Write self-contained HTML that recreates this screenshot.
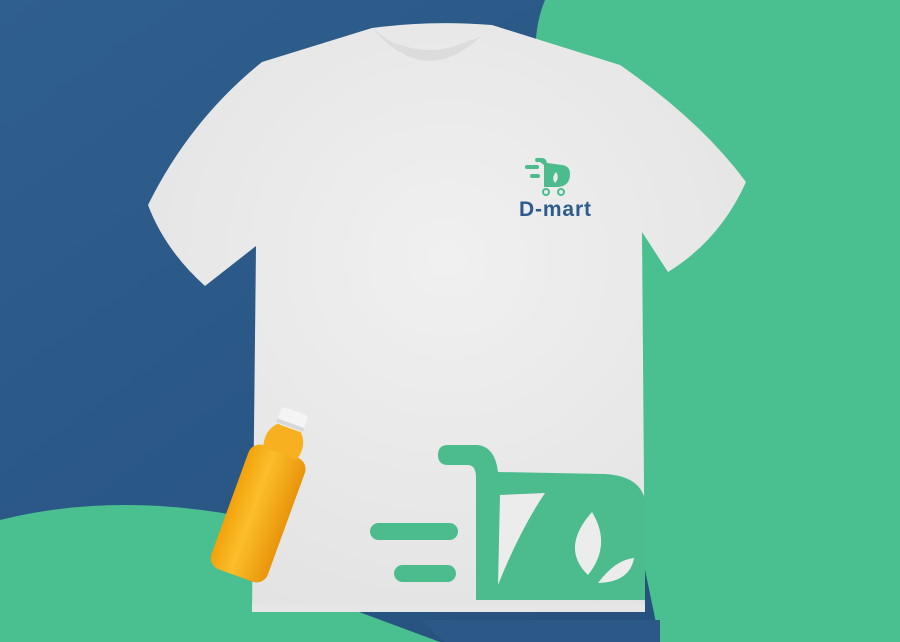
<!DOCTYPE html>
<html><head><meta charset="utf-8"><style>
html,body{margin:0;padding:0;width:900px;height:642px;overflow:hidden;background:#2d5b89}
svg{display:block}
</style></head><body>
<svg width="900" height="642" viewBox="0 0 900 642" xmlns="http://www.w3.org/2000/svg">
<defs>
<linearGradient id="bg" x1="0" y1="0" x2="1" y2="1"><stop offset="0" stop-color="#2f5f8e"/><stop offset="1" stop-color="#254f7c"/></linearGradient>
<linearGradient id="juice" x1="0" y1="0" x2="1" y2="0"><stop offset="0" stop-color="#f2a20c"/><stop offset="0.4" stop-color="#fbbe2a"/><stop offset="1" stop-color="#e9940a"/></linearGradient>
<radialGradient id="shirt" cx="0.5" cy="0.4" r="0.7"><stop offset="0" stop-color="#f0f0f0"/><stop offset="1" stop-color="#e2e2e2"/></radialGradient>
</defs>
<rect width="900" height="642" fill="url(#bg)"/>
<path d="M545 0 Q520 60 560 160 L660 642 L900 642 L900 0Z" fill="#4abf8f"/>
<path d="M0 520 Q120 490 260 520 L300 590 L440 642 L0 642Z" fill="#4abf8f"/>
<path d="M420 620 L660 620 L660 642 L445 642Z" fill="#2b5886"/>
<!-- shirt -->
<path d="M372 28 Q430 20 492 25 L620 65 Q700 120 746 182 Q720 240 668 272 L642 232 L645 612 L252 612 L256 246 L205 286 Q165 250 148 205 Q190 120 262 62 Z" fill="url(#shirt)"/>
<path d="M372 28 Q430 95 492 25 Q480 40 470 40 Q430 60 388 40Z" fill="#dcdcdc"/>
<path d="M252 604 L645 604 L645 612 L252 612Z" fill="#e6e6e6"/>
<!-- big logo -->
<g fill="#4cbc8d">
<rect x="370" y="523" width="88" height="17" rx="8.5"/>
<rect x="394" y="565" width="62" height="17" rx="8.5"/>
<path d="M448 445 L478 445 Q495 447 498 472 L605 474 Q640 476 645 500 L645 600 L476 600 L476 478 Q476 465 468 465 L448 465 Q438 465 438 455 Q438 445 448 445Z"/>
</g>
<path d="M500 495 L545 493 Q520 530 498 585Z" fill="#ececec"/>
<path d="M592 512 Q612 545 588 575 Q560 548 592 512Z" fill="#ececec"/>
<path d="M598 583 Q615 560 634 558 Q630 582 598 583Z" fill="#ececec"/>
<!-- small logo -->
<g fill="#4cbc8d">
<rect x="525" y="165" width="14" height="4" rx="2"/>
<rect x="530" y="174" width="10" height="4" rx="2"/>
<path d="M536 158 L542 158 Q546 158 547 163 L562 165 Q570 166 570 174 Q570 186 558 187 L544 187 L544 165 L540 162 L536 162 Q534 160 536 158Z"/>
<circle cx="546" cy="192" r="3" fill="none" stroke="#4cbc8d" stroke-width="2"/>
<circle cx="561" cy="192" r="3" fill="none" stroke="#4cbc8d" stroke-width="2"/>
</g>
<path d="M556 172 Q560 178 555 183 Q551 178 556 172Z" fill="#ececec"/>
<text x="519" y="216" font-family="'Liberation Sans',sans-serif" font-size="21" font-weight="bold" fill="#2f5b8c" textLength="72">D-mart</text>
<!-- bottle -->
<g transform="rotate(20 262 500)">
<rect x="233" y="448" width="60" height="132" rx="12" fill="url(#juice)"/>
<path d="M245 450 Q240 432 252 422 L274 422 Q286 432 281 450Z" fill="#f7b01f"/>
<rect x="249" y="405" width="28" height="18" rx="4" fill="#f4f4f4"/>
<rect x="249" y="418" width="28" height="4" fill="#d8d8d8"/>
</g>
</svg>
</body></html>
